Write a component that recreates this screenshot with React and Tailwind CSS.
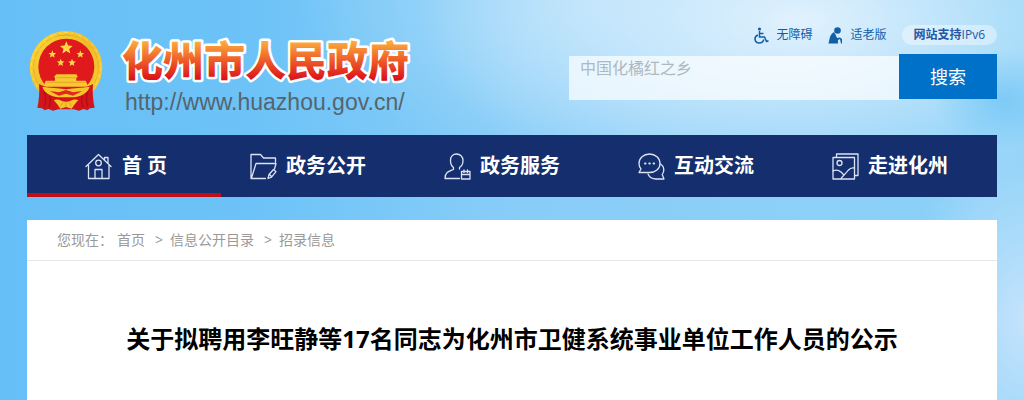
const NAV_ITEMS = [
  { label: "首 页", icon: HomeIcon, active: true },
  { label: "政务公开", icon: FolderIcon },
  { label: "政务服务", icon: PersonIcon },
  { label: "互动交流", icon: ChatIcon },
  { label: "走进化州", icon: PictureIcon },
];

const CRUMBS = ["首页", "信息公开目录", "招录信息"];

// small five-pointed star
function Star({ x, y, r }) {
  const points = Array.from({ length: 10 }, (_, i) => {
    const a = (Math.PI / 5) * i - Math.PI / 2;
    const d = i % 2 ? r * 0.45 : r;
    return `${x + d * Math.cos(a)},${y + d * Math.sin(a)}`;
  }).join(" ");
  return <polygon points={points} fill="#ffd84a" />;
}

function Emblem() {
  return (
    <svg viewBox="26 30 222 246" className="w-[74px] h-[82px] mt-0.5 shrink-0" aria-hidden="true">
      <defs>
        <linearGradient id="gold" x1="0" y1="0" x2="1" y2="1">
          <stop offset="0" stopColor="#fcd83a" />
          <stop offset="0.5" stopColor="#f0bc2a" />
          <stop offset="1" stopColor="#fbd235" />
        </linearGradient>
      </defs>
      <circle cx="137" cy="142" r="109" fill="url(#gold)" />
      <circle cx="137" cy="142" r="97" fill="none" stroke="#e2a51c" strokeWidth="2" strokeDasharray="22 6" />
      <circle cx="137" cy="142" r="104" fill="none" stroke="#ffe65a" strokeWidth="2" strokeDasharray="10 12" />
      <path d="M110 40c10 8 18 8 27 3 9 5 17 5 27-3" fill="none" stroke="#d9a01c" strokeWidth="2" />
      <circle cx="138" cy="140" r="84" fill="#df191c" />
      <Star x={138} y={84} r={20} />
      <Star x={96} y={103} r={12} />
      <Star x={180} y={103} r={12} />
      <Star x={121} y={128} r={12} />
      <Star x={155} y={128} r={12} />
      {/* gate */}
      <path d="M108 163h60l5 9h-5v10h28l8 18H70l6-18h28v-10h-4z" fill="#f7c832" />
      <path d="M108 173h58M80 187h116" stroke="#d79a1c" strokeWidth="2" />
      {/* ribbons */}
      <path d="M56 192c14 8 32 12 46 13h70c14-1 32-5 46-13-2 26 0 50 5 71l-14 2-8 6-11-4-14 5-16-4h-46l-16 4-14-5-11 4-8-6-14-2c5-21 7-45 5-71z" fill="#d3151b" />
      <path d="M72 214c6 16 4 32 0 46M88 228c4 12 2 24-2 34M202 214c-6 16-4 32 0 46M186 228c-4 12-2 24 2 34" fill="none" stroke="#b00e15" strokeWidth="4" />
      <path d="M66 200c24 5 46 2 71 8 25-6 47-3 71-8-6 22-32 32-56 32h-30c-24 0-50-10-56-32z" fill="#f6c52c" />
      <path d="M88 213l28 4 21-7 21 7 28-4-28 14-21-6-21 6z" fill="#dc2a1c" />
      <path d="M100 240c16-6 24 5 37 5s21-11 37-5l-12 14-8 12-17-5-17 5-8-12z" fill="#f6c52c" />
      <path d="M137 248v14M127 248l-6 12M147 248l6 12" stroke="#d98a14" strokeWidth="2" />
    </svg>
  );
}

function SiteName() {
  return (
    <svg viewBox="0 0 294 62" className="w-[294px] h-[62px]" role="img" aria-label="化州市人民政府">
      <defs>
        <linearGradient id="title" gradientUnits="userSpaceOnUse" x1="0" y1="14" x2="0" y2="52">
          <stop offset="0" stopColor="#fbaa3c" />
          <stop offset="0.5" stopColor="#ee5a28" />
          <stop offset="1" stopColor="#d9101a" />
        </linearGradient>
      </defs>
      <text
        x="5"
        y="48"
        fontSize="41"
        fontWeight="900"
        fill="url(#title)"
        stroke="#fff"
        strokeWidth="5"
        strokeLinejoin="round"
        paintOrder="stroke"
        className="font-['Noto_Sans_CJK_SC',sans-serif]"
      >
        化州市人民政府
      </text>
    </svg>
  );
}

function NavIcon({ children }) {
  return (
    <svg
      viewBox="0 0 27 27"
      className="size-[27px] shrink-0"
      fill="none"
      stroke="#dbe3f5"
      strokeWidth="1.3"
      strokeLinejoin="round"
      strokeLinecap="round"
      aria-hidden="true"
    >
      {children}
    </svg>
  );
}

function HomeIcon() {
  return (
    <NavIcon>
      <path d="M1 13.5L13.5 1.5 26 13.5M3.5 12v13.5h20.5V12M19.5 7V4.5h3.5V10" />
      <circle cx="13.5" cy="10" r="2.8" />
      <path d="M10 25.5V16.5h7v9" />
    </NavIcon>
  );
}

function FolderIcon() {
  return (
    <NavIcon>
      <path d="M25.5 9V5H13.5L10.5 1.5H1V25.5H15.5M1.5 25L6 10.5H26L24.5 16" />
      <path d="M18 25.5l1-4 4.5-5 2.5 2.2-4.5 5.5zM19.5 21.5l2 2" />
    </NavIcon>
  );
}

function PersonIcon() {
  return (
    <NavIcon>
      <path d="M9.5 14.5C7.5 13 6.5 10 6.5 7.5 6.5 3.5 9 1 12.5 1s6.5 2.5 6.5 6.5c0 2.5-1 5.5-3.5 7v1.5M9.5 14.5v2C6 18 1 18.5 1 25.5H15.5" />
      <path d="M17.5 18.5h8.5v7.5h-8.5zM17.5 21.5h8.5M20 17v2.5M23.5 17v2.5" />
    </NavIcon>
  );
}

function ChatIcon() {
  return (
    <NavIcon>
      <path d="M11.5 1C17.5 1 22 5.2 22 10.5S17.5 19.5 11.5 19.5H1L3 16C1.5 14.5 1 12.5 1 10.5 1 5.2 5.5 1 11.5 1z" />
      <path d="M22.5 11c2.5 1.5 3.5 4 3.2 7-.2 1.5-.8 2.5-1.5 3.5L26 26H18c-4 0-6.5-1.5-8-5" />
      <path d="M7 10.5h.5M11.3 10.5h.5M15.6 10.5h.5" strokeWidth="2" />
    </NavIcon>
  );
}

function PictureIcon() {
  return (
    <NavIcon>
      <path d="M4.5 4V1H26V22.5H23M1 4.5H22.5V26H1z" />
      <circle cx="7.5" cy="10" r="2.5" />
      <path d="M1 18c3-1.5 5.5-1 8 1l3 3M9 25.5c2-3 5-5 7-8 2-2.5 4-3 6.5-2.5" />
    </NavIcon>
  );
}

function WheelchairIcon() {
  return (
    <svg viewBox="0 0 15 17" className="w-[15px] h-[17px]" fill="none" stroke="#125fa8" strokeWidth="1.5" aria-hidden="true">
      <circle cx="5.5" cy="2" r="1.6" fill="#125fa8" stroke="none" />
      <path d="M5.5 4v6h5l2 4.5 2-.8M5.5 6.5h4" />
      <path d="M4 8C1.5 9 .8 10.8 1 12.5c.4 2 2 3.5 4.3 3.5 2.4 0 4-1.5 4.5-3.5" />
    </svg>
  );
}

function ElderIcon() {
  return (
    <svg viewBox="0 0 15 17" className="w-[15px] h-[17px]" fill="#125fa8" aria-hidden="true">
      <circle cx="9.5" cy="3.5" r="3.3" />
      <path d="M6 5C3 6.500 2 9.500 1.500 12L.5 16.500h9.500v-3.500l2-1 1 4.500h1V12l-2-1.500-3 .5-1-2.500z" />
    </svg>
  );
}

export default function App() {
  return (
    <div
      className="min-h-screen px-4 bg-[#74c5f8]
        bg-[radial-gradient(ellipse_70px_50px_at_98%_100px,rgba(110,196,246,0.7),rgba(110,196,246,0)),radial-gradient(ellipse_380px_180px_at_78%_20px,rgba(224,241,253,1),rgba(224,241,253,0)),radial-gradient(ellipse_300px_160px_at_58%_0px,rgba(190,228,251,0.7),rgba(190,228,251,0)),radial-gradient(ellipse_120px_210px_at_100%_320px,rgba(196,227,252,1),rgba(196,227,252,0)),linear-gradient(90deg,#66bff6_0%,#6dc3f7_25%,#88cdf8_50%,#8dd0f8_80%,#86cff7_100%)]
        font-['Open_Sans','Noto_Sans_CJK_SC',sans-serif]"
    >
      <div className="max-w-[970px] mx-auto">

        {/* HEADER */}
        <header className="flex justify-between h-[135px]">
          <a href="#" className="flex gap-3.5 pt-7 pl-0.5">
            <Emblem />
            <div>
              <SiteName />
              <p className="pl-2 text-[23px] leading-6 text-[#55646e] font-['Liberation_Sans',Arial,sans-serif]">
                http://www.huazhou.gov.cn/
              </p>
            </div>
          </a>

          <div className="w-[428px] pt-[25px]">
            <div className="flex justify-end items-center h-5 text-xs text-[#125fa8]">
              <a href="#" className="flex items-center gap-2">
                <WheelchairIcon />
                无障碍
              </a>
              <a href="#" className="flex items-center gap-2 ml-[15px]">
                <ElderIcon />
                适老版
              </a>
              <a href="#" className="ml-[15px] px-3 h-5 leading-5 rounded-full bg-white/40 text-[#2456a6]">
                <b>网站支持</b>IPv6
              </a>
            </div>

            <form className="flex items-start mt-[9px]" onSubmit={(e) => e.preventDefault()}>
              <input
                type="text"
                aria-label="搜索"
                placeholder="中国化橘红之乡"
                className="flex-1 min-w-0 h-11 mt-0.5 px-[11px] pb-5 bg-white/70 text-base placeholder:text-[#adb8c0] outline-none"
              />
              <button className="w-[98px] h-[45px] bg-[#0071c8] text-white text-lg">搜索</button>
            </form>
          </div>
        </header>

        {/* NAV */}
        <nav className="grid grid-cols-5 bg-[#152e6e]">
          {NAV_ITEMS.map(({ label, icon: Icon, active }) => (
            <a
              key={label}
              href="#"
              className={`flex items-center justify-center h-[62px] border-b-4 pt-1 text-white text-xl font-bold ${
                active ? "gap-2.5 border-[#c00d16] pl-1" : "gap-[9px] border-transparent pr-5"
              }`}
            >
              <Icon />
              {label}
            </a>
          ))}
        </nav>

        {/* ARTICLE */}
        <main className="mt-[23px] min-h-[calc(100vh-220px)] bg-white">
          <div className="flex items-center h-[41px] px-[30px] border-b border-[#e8e8e8] text-sm text-[#999]">
            <span className="mr-1">您现在：</span>
            {CRUMBS.map((crumb, i) => (
              <span key={crumb}>
                {i > 0 && <span className="ml-2.5 mr-[7px]">&gt;</span>}
                <a href="#">{crumb}</a>
              </span>
            ))}
          </div>
          <h1 className="pt-[60px] pb-6 px-4 text-center text-2xl leading-9 font-bold text-black">
            关于拟聘用李旺静等17名同志为化州市卫健系统事业单位工作人员的公示
          </h1>
        </main>
      </div>
    </div>
  );
}
